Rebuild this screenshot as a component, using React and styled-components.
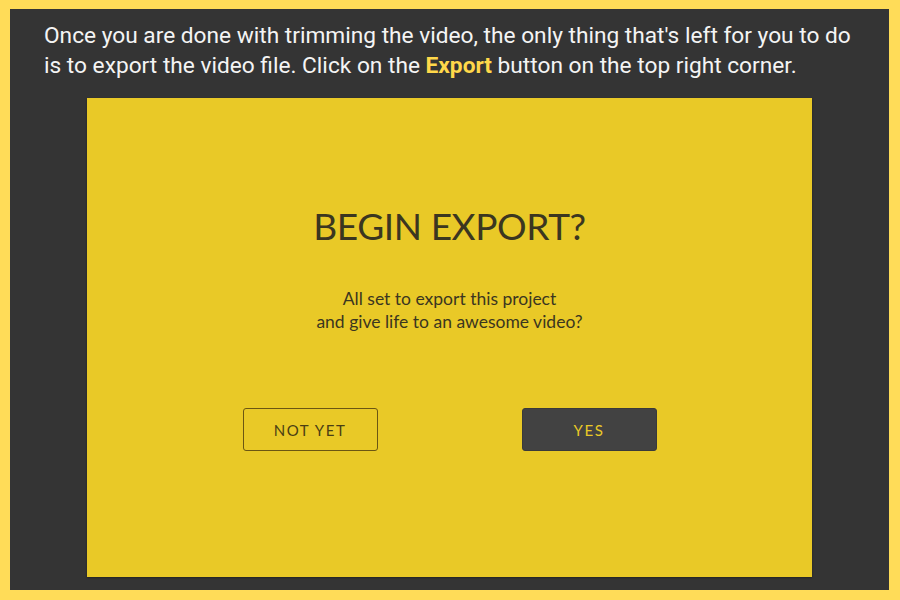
import React from "react";
import styled, { createGlobalStyle } from "styled-components";

const Global = createGlobalStyle`
  html, body { margin: 0; padding: 0; background: #FFDC58; }
  #root { width: 900px; height: 600px; }
`;

const Frame = styled.div`
  width: 900px;
  height: 600px;
  box-sizing: border-box;
  padding: 9px 11px 10px 10px;
  background: #FFDC58;
`;

const Panel = styled.div`
  height: 100%;
  box-sizing: border-box;
  background: #343434;
  padding: 12px 0 13px;
  display: flex;
  flex-direction: column;
`;

const Intro = styled.p`
  margin: 0 0 17px 34px;
  font-family: Roboto, "Liberation Sans", sans-serif;
  font-size: 22.7px;
  line-height: 30px;
  color: #F4F4F4;
  white-space: nowrap;
`;

const Highlight = styled.b`
  color: #FFD84A;
  font-weight: 700;
`;

const Dialog = styled.div`
  width: 725px;
  flex: 1;
  margin: 0 auto;
  background: #E9C927;
  box-shadow: 0 1px 2px rgba(0, 0, 0, 0.35);
  display: flex;
  flex-direction: column;
  align-items: center;
  color: #3B3620;
  font-family: Lato, "Open Sans", sans-serif;
`;

const Title = styled.h1`
  margin: 106px 0 0;
  font-size: 37px;
  line-height: 44px;
  font-weight: 400;
  letter-spacing: -0.4px;
`;

const Message = styled.p`
  margin: 39px 0 0;
  font-size: 17.5px;
  line-height: 23px;
  text-align: center;
`;

const Actions = styled.div`
  margin-top: 75px;
  display: flex;
  gap: 144px;
`;

const Button = styled.button`
  width: 135px;
  height: 43px;
  box-sizing: border-box;
  border-radius: 3px;
  font-family: Lato, "Open Sans", sans-serif;
  font-size: 15px;
  letter-spacing: 1.6px;
  border: 1.5px solid ${(p) => (p.$primary ? "#3A3A3A" : "#6B5612")};
  background: ${(p) => (p.$primary ? "#424242" : "transparent")};
  color: ${(p) => (p.$primary ? "#E9C927" : "#4A3E14")};
  padding: 0;
  cursor: pointer;
`;

export default function App() {
  return (
    <>
      <Global />
      <Frame>
        <Panel>
          <Intro>
            Once you are done with trimming the video, the only thing that's left for you to do
            <br />
            is to export the video file. Click on the <Highlight>Export</Highlight> button on the top right corner.
          </Intro>
          <Dialog>
            <Title>BEGIN EXPORT?</Title>
            <Message>
              All set to export this project
              <br />
              and give life to an awesome video?
            </Message>
            <Actions>
              <Button>NOT YET</Button>
              <Button $primary>YES</Button>
            </Actions>
          </Dialog>
        </Panel>
      </Frame>
    </>
  );
}
